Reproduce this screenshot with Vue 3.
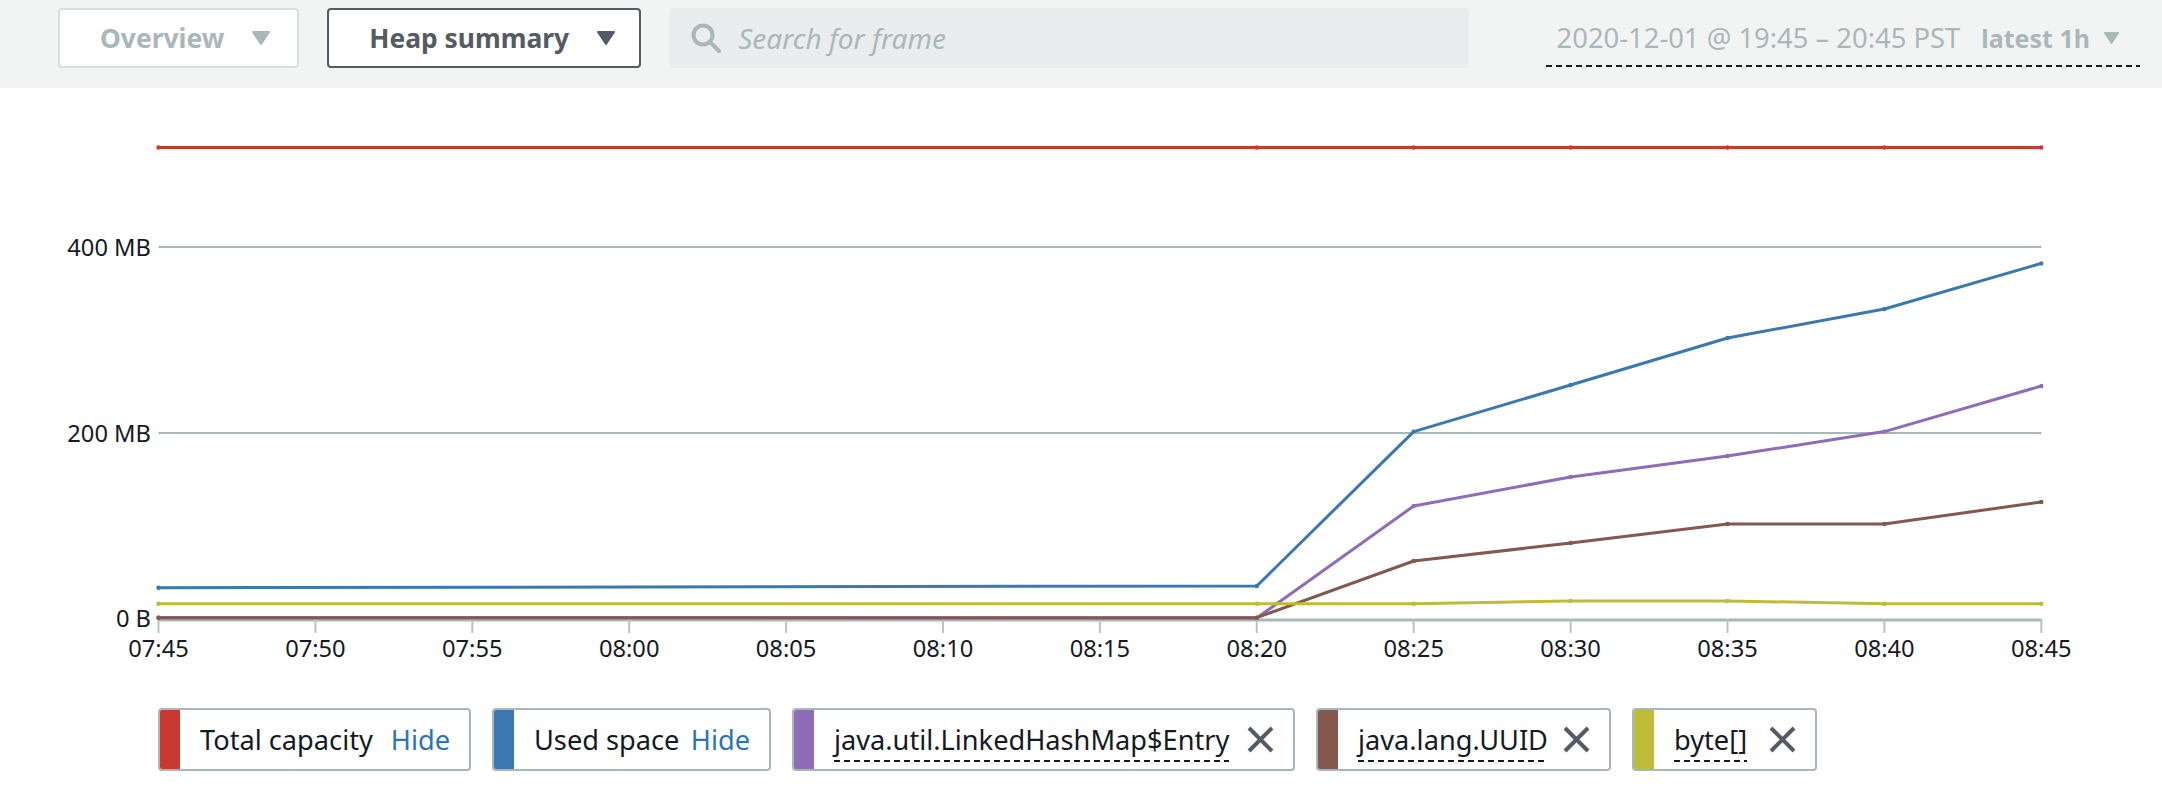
<script setup>
// chart area in page pixels
const x0 = 158.5
const dx = 156.9
const xAt = i => x0 + dx * i

const xLabels = ['07:45', '07:50', '07:55', '08:00', '08:05', '08:10', '08:15', '08:20', '08:25', '08:30', '08:35', '08:40', '08:45']
const grid = [
  { y: 247, label: '400 MB' },
  { y: 433, label: '200 MB' }
]

// first point, then 08:20 onwards (index 7-12)
const series = [
  { name: 'red', color: '#c9392f', y0: 147.5, ys: [147.5, 147.5, 147.5, 147.5, 147.5, 147.5] },
  { name: 'blue', color: '#3b78b0', y0: 587.7, ys: [586, 431.6, 385, 338, 309, 263.4] },
  { name: 'purple', color: '#8f6cb8', y0: 617.7, ys: [618, 506, 477, 456, 431.6, 386] },
  { name: 'brown', color: '#84584e', y0: 617.7, ys: [617.7, 561, 543, 524, 524, 502] },
  { name: 'yellow', color: '#bdbb38', y0: 603.7, ys: [603.7, 603.7, 601, 601, 603.7, 603.7] }
].map(s => {
  const pts = [[xAt(0), s.y0], ...s.ys.map((y, i) => [xAt(7 + i), y])]
  return { ...s, pts, d: pts.map(p => p.join(',')).join(' ') }
})

const legend = [
  { name: 'Total capacity', color: '#c9392f', width: 313, hide: true },
  { name: 'Used space', color: '#3b78b0', width: 279, hide: true },
  { name: 'java.util.LinkedHashMap$Entry', color: '#8f6cb8', width: 503 },
  { name: 'java.lang.UUID', color: '#84584e', width: 295 },
  { name: 'byte[]', color: '#bdbb38', width: 185 }
]
</script>

<template>
  <div class="page">
    <div class="toolbar">
      <div class="dropdown disabled">
        <span>Overview</span>
        <svg class="caret" viewBox="0 0 20 16"><polygon points="2,2 18,2 10,14" /></svg>
      </div>
      <div class="dropdown active">
        <span>Heap summary</span>
        <svg class="caret" viewBox="0 0 20 16"><polygon points="2,2 18,2 10,14" /></svg>
      </div>
      <div class="search">
        <svg class="search-icon" viewBox="0 0 30 30">
          <circle cx="12" cy="12" r="9.5" />
          <line x1="19" y1="19" x2="28" y2="28" />
        </svg>
        <span>Search for frame</span>
      </div>
      <div class="time-range">
        <span class="time">2020-12-01 @ 19:45 – 20:45 PST</span>
        <b>latest 1h</b>
        <svg class="caret small" viewBox="0 0 20 16"><polygon points="2,2 18,2 10,14" /></svg>
      </div>
    </div>

    <svg class="chart" viewBox="0 88 2162 620" width="2162" height="620">
      <line
        v-for="g in grid"
        :key="g.y"
        :x1="x0"
        :x2="xAt(12)"
        :y1="g.y"
        :y2="g.y"
        class="grid-line"
      />
      <line :x1="x0" :x2="xAt(12)" y1="620" y2="620" class="grid-line base" />
      <line
        v-for="(l, i) in xLabels"
        :key="l"
        :x1="xAt(i)"
        :x2="xAt(i)"
        y1="619"
        y2="633"
        class="tick"
      />

      <text v-for="g in grid" :key="g.label" x="151" :y="g.y + 8.5" text-anchor="end" class="axis-text">{{ g.label }}</text>
      <text x="151" y="627" text-anchor="end" class="axis-text">0 B</text>
      <text
        v-for="(l, i) in xLabels"
        :key="l + 'text'"
        :x="xAt(i)"
        y="657"
        text-anchor="middle"
        class="axis-text"
      >{{ l }}</text>

      <g v-for="s in series" :key="s.name">
        <polyline :points="s.d" fill="none" :stroke="s.color" stroke-width="3" stroke-linejoin="round" />
        <circle v-for="p in s.pts" :key="p[0]" :cx="p[0]" :cy="p[1]" r="2.2" :fill="s.color" />
      </g>
    </svg>

    <div class="legend">
      <div
        v-for="item in legend"
        :key="item.name"
        class="legend-item"
        :style="{ width: item.width + 'px' }"
      >
        <span class="swatch" :style="{ background: item.color }"></span>
        <span class="legend-name" :class="{ dashed: !item.hide }">{{ item.name }}</span>
        <span v-if="item.hide" class="hide-link">Hide</span>
        <svg v-else class="close" viewBox="0 0 27 27">
          <line x1="2" y1="2" x2="25" y2="25" />
          <line x1="25" y1="2" x2="2" y2="25" />
        </svg>
      </div>
    </div>
  </div>
</template>

<style scoped>
.page {
  width: 2162px;
  height: 794px;
  background: #fff;
  font-family: "Noto Sans", "Open Sans", sans-serif;
  overflow: hidden;
}

.toolbar {
  display: flex;
  align-items: flex-start;
  height: 88px;
  box-sizing: border-box;
  padding: 8px 22px 0 58px;
  background: #f2f4f4;
}

.dropdown {
  display: flex;
  align-items: center;
  gap: 27px;
  height: 60px;
  box-sizing: border-box;
  padding: 0 23px 0 40px;
  margin-right: 28px;
  background: #fff;
  border: 2px solid #545b64;
  border-radius: 4px;
  font-size: 26.4px;
  font-weight: 700;
  color: #545b64;
}

.dropdown.disabled {
  padding-right: 26px;
  border-color: #d9dfdf;
  color: #aab7b8;
}

.caret {
  width: 20px;
  height: 16px;
  flex: none;
  fill: currentColor;
  stroke: currentColor;
  stroke-width: 2;
  stroke-linejoin: round;
}

.search {
  display: flex;
  align-items: center;
  gap: 17px;
  width: 800px;
  height: 60px;
  box-sizing: border-box;
  padding-left: 22px;
  background: #eaeded;
  border-radius: 4px;
  font-size: 28px;
  font-style: italic;
  color: #aab7b8;
}

.search-icon {
  width: 30px;
  height: 30px;
  fill: none;
  stroke: #aab7b8;
  stroke-width: 4;
  stroke-linecap: round;
}

.time-range {
  display: flex;
  align-items: center;
  height: 59px;
  margin-left: auto;
  padding: 0 20px 0 11px;
  font-size: 27.4px;
  color: #aab7b8;
  background-image: repeating-linear-gradient(to right, #16191f 0 6px, transparent 6px 10px);
  background-size: 100% 2px;
  background-position: bottom;
  background-repeat: no-repeat;
}

.time-range b {
  margin-left: 21px;
  margin-right: 13px;
  font-size: 25px;
}

.caret.small {
  width: 17px;
  height: 14px;
}

.chart {
  display: block;
}

.grid-line {
  stroke: #aab7b8;
  stroke-width: 2;
}

.grid-line.base {
  stroke-width: 3;
}

.tick {
  stroke: #b8c3c4;
  stroke-width: 2;
}

.axis-text {
  font-size: 23.7px;
  fill: #16191f;
}

.legend {
  display: flex;
  gap: 21px;
  padding-left: 158px;
}

.legend-item {
  display: flex;
  flex: none;
  align-items: center;
  height: 63px;
  box-sizing: border-box;
  padding-right: 19px;
  background: #fff;
  border: 2px solid #aab7b8;
  border-radius: 4px;
  font-size: 27.2px;
  line-height: 32px;
  color: #16191f;
  overflow: hidden;
}

.swatch {
  flex: none;
  align-self: stretch;
  width: 20px;
  margin-right: 20px;
}

.legend-name {
  white-space: nowrap;
}

.legend-name.dashed {
  padding: 6px 0;
  background-image: repeating-linear-gradient(to right, #16191f 0 6px, transparent 6px 10px);
  background-size: 100% 2px;
  background-position: bottom;
  background-repeat: no-repeat;
}

.hide-link {
  margin-left: auto;
  color: #2b74b8;
}

.close {
  flex: none;
  width: 27px;
  height: 27px;
  margin-left: auto;
  stroke: #545b64;
  stroke-width: 4;
}
</style>
